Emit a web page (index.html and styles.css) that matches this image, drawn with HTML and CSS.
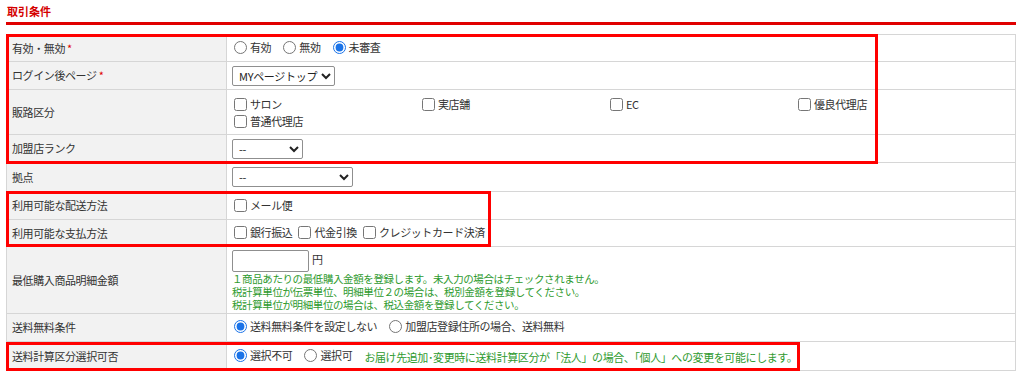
FILE: index.html
```html
<!DOCTYPE html>
<html lang="ja">
<head>
<meta charset="utf-8">
<title>取引条件</title>
<link rel="stylesheet" href="styles.css">
</head>
<body>
<div class="page">
  <h2 class="section-title">取引条件</h2>
  <div class="table-wrap">
    <table class="form-table">
      <tbody>
        <tr class="r1">
          <th>有効・無効 <span class="req">*</span></th>
          <td>
            <label class="opt"><input type="radio" name="valid">有効</label>
            <label class="opt"><input type="radio" name="valid">無効</label>
            <label class="opt"><input type="radio" name="valid" checked>未審査</label>
          </td>
        </tr>
        <tr class="r2">
          <th>ログイン後ページ <span class="req">*</span></th>
          <td><select class="sel sel-my"><option>MYページトップ</option></select></td>
        </tr>
        <tr class="r3">
          <th>販路区分</th>
          <td>
            <div class="check-grid">
              <label class="chk"><input type="checkbox">サロン</label>
              <label class="chk"><input type="checkbox">実店舗</label>
              <label class="chk"><input type="checkbox">EC</label>
              <label class="chk"><input type="checkbox">優良代理店</label>
              <label class="chk"><input type="checkbox">普通代理店</label>
            </div>
          </td>
        </tr>
        <tr class="r4">
          <th>加盟店ランク</th>
          <td><select class="sel sel-rank"><option>--</option></select></td>
        </tr>
        <tr class="r5">
          <th>拠点</th>
          <td><select class="sel sel-base"><option>--</option></select></td>
        </tr>
        <tr class="r6">
          <th>利用可能な配送方法</th>
          <td><label class="chk"><input type="checkbox">メール便</label></td>
        </tr>
        <tr class="r7">
          <th>利用可能な支払方法</th>
          <td>
            <label class="chk inline"><input type="checkbox">銀行振込</label>
            <label class="chk inline"><input type="checkbox">代金引換</label>
            <label class="chk inline"><input type="checkbox">クレジットカード決済</label>
          </td>
        </tr>
        <tr class="r8">
          <th>最低購入商品明細金額</th>
          <td>
            <div class="amount"><input type="text" class="txt"><span class="unit">円</span></div>
            <p class="note">１商品あたりの最低購入金額を登録します。未入力の場合はチェックされません。<br>税計算単位が伝票単位、明細単位２の場合は、税別金額を登録してください。<br>税計算単位が明細単位の場合は、税込金額を登録してください。</p>
          </td>
        </tr>
        <tr class="r9">
          <th>送料無料条件</th>
          <td>
            <label class="opt"><input type="radio" name="free" checked>送料無料条件を設定しない</label>
            <label class="opt"><input type="radio" name="free">加盟店登録住所の場合、送料無料</label>
          </td>
        </tr>
        <tr class="r10">
          <th>送料計算区分選択可否</th>
          <td>
            <label class="opt"><input type="radio" name="calc" checked>選択不可</label>
            <label class="opt"><input type="radio" name="calc">選択可</label>
            <span class="note-inline">お届け先追加･変更時に送料計算区分が「法人」の場合、「個人」への変更を可能にします。</span>
          </td>
        </tr>
      </tbody>
    </table>
    <div class="mark mark1"></div>
    <div class="mark mark2"></div>
    <div class="mark mark3"></div>
  </div>
</div>
</body>
</html>
```

FILE: styles.css
```css
* { box-sizing: border-box; }
html, body { margin: 0; padding: 0; background: #fff; }
body {
  font-family: "Noto Sans CJK JP", "Noto Sans", sans-serif;
  font-size: 11px;
  color: #333;
}
.page { padding: 4px 8px 0 6px; }
.section-title {
  margin: 0 0 0 1px;
  font-size: 11px;
  font-weight: bold;
  color: #d40000;
  line-height: 14px;
  height: 18px;
}
.table-wrap {
  position: relative;
  border-top: 3px solid #e00000;
  padding-top: 9px;
}
.form-table {
  width: 100%;
  border-collapse: collapse;
  letter-spacing: -0.4px;
}
.form-table th,
.form-table td {
  border: 1px solid #d6d6d6;
  padding: 0 6px 0 5px;
  vertical-align: middle;
  line-height: 15px;
}
.form-table th {
  width: 220px;
  background: #f2f2f2;
  text-align: left;
  font-weight: normal;
}
.form-table td { background: #fff; }
.r1 th, .r1 td { height: 27px; }
.r2 th, .r2 td { height: 28px; }
.r3 th, .r3 td { height: 45px; }
.r4 th, .r4 td { height: 28px; }
.r5 th, .r5 td { height: 29px; }
.r6 th, .r6 td { height: 28px; }
.r7 th, .r7 td { height: 27px; }
.r8 th, .r8 td { height: 67px; }
.r9 th, .r9 td { height: 28px; }
.r10 th, .r10 td { height: 29px; }
.req { color: #e00000; }
.opt {
  display: inline-flex;
  align-items: center;
  margin-right: 8px;
}
.opt input {
  margin: 0 3px 0 2px;
  width: 13px;
  height: 13px;
  accent-color: #1a73e8;
}
.chk { display: flex; align-items: center; height: 17px; }
.chk.inline { display: inline-flex; margin-right: 2px; }
.chk input {
  margin: 0 3px 0 2px;
  width: 13px;
  height: 13px;
}
.check-grid {
  display: grid;
  grid-template-columns: repeat(4, 188px);
  padding-top: 1px;
}
.sel {
  height: 20px;
  font-family: inherit;
  font-size: 11px;
  color: #222;
  border: 1px solid #8f8f8f;
  border-radius: 2px;
  background: #fff;
  padding: 0 0 0 2px;
  letter-spacing: -0.3px;
}
.sel-my { width: auto; min-width: 99px; }
.sel-rank { width: 71px; }
.sel-base { width: 121px; }
.amount { display: flex; align-items: flex-end; gap: 3px; margin-top: 1px; }
.txt {
  width: 77px;
  height: 22px;
  border: 1px solid #8f8f8f;
  border-radius: 2px;
  font-family: inherit;
}
.unit { line-height: 15px; margin-bottom: 5px; }
.note {
  margin: 0;
  color: #2e9a2e;
  font-size: 10.5px;
  line-height: 13px;
  padding-bottom: 1px;
}
.note-inline { color: #2e9a2e; margin-left: 2px; }
.mark {
  position: absolute;
  left: 0;
  border: 3px solid #ff0000;
  pointer-events: none;
}
.mark1 { top: 9px; width: 872px; height: 130px; }
.mark2 { top: 166px; width: 485px; height: 56px; }
.mark3 { top: 317px; width: 794px; height: 29px; }
```
